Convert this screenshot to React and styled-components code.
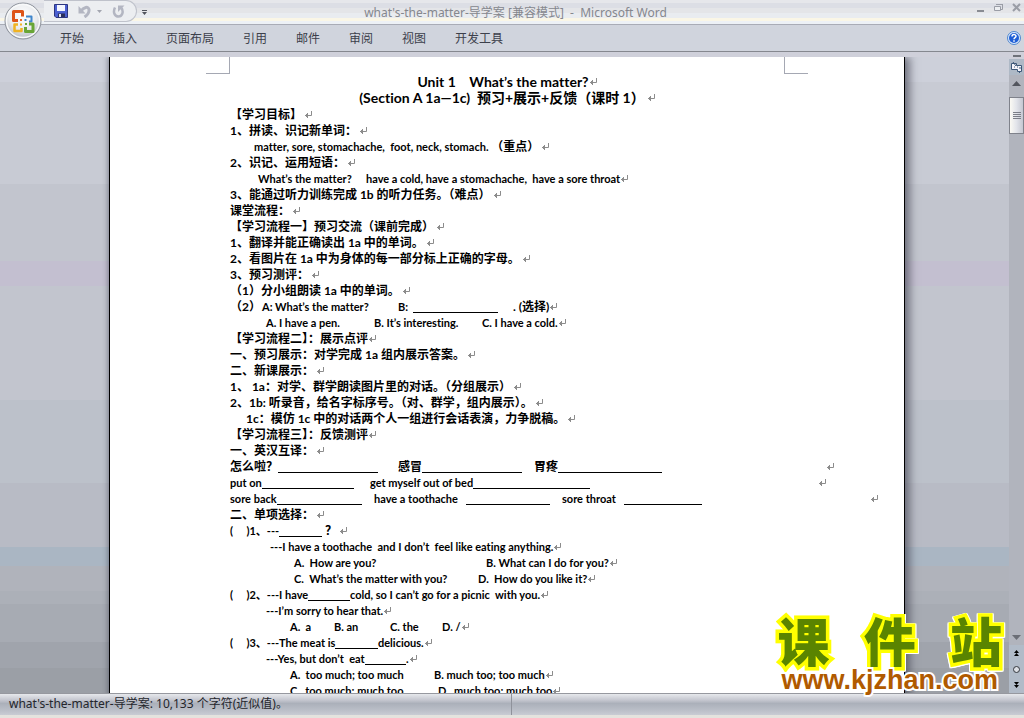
import React from "react";
import styled, { createGlobalStyle, css } from "styled-components";

const TABS = ["开始", "插入", "页面布局", "引用", "邮件", "审阅", "视图", "开发工具"];

// one entry per line: indent before the first cell, then the cells.
// a cell with width ends at a tab stop, a cell with gap draws a blank up to that gap
const LINES = [
  { cells: [{ t: "【学习目标】" }] },
  { cells: [{ t: "1、拼读、识记新单词：" }] },
  { indent: 24, cells: [{ t: "matter, sore, stomachache,  foot, neck, stomach. " }, { t: "（重点）" }] },
  { cells: [{ t: "2、识记、运用短语：" }] },
  {
    indent: 28,
    tight: true,
    cells: [{ t: "What’s the matter?", w: 108 }, { t: "have a cold, have a stomachache,  have a sore throat" }],
  },
  { cells: [{ t: "3、能通过听力训练完成 1b 的听力任务。（难点）" }] },
  { cells: [{ t: "课堂流程：" }] },
  { cells: [{ t: "【学习流程一】预习交流（课前完成）" }] },
  { cells: [{ t: "1、翻译并能正确读出 1a 中的单词。" }] },
  { cells: [{ t: "2、看图片在 1a 中为身体的每一部分标上正确的字母。" }] },
  { cells: [{ t: "3、预习测评：" }] },
  { cells: [{ t: "（1）分小组朗读 1a 中的单词。" }] },
  {
    tight: true,
    cells: [
      { t: "（2）", w: 32 },
      { t: "A: What’s the matter?", w: 136 },
      { t: "B:  ", w: 112, gap: 12 },
      { t: " . (选择)" },
    ],
  },
  {
    indent: 36,
    tight: true,
    cells: [{ t: "A. I have a pen.", w: 108 }, { t: "B. It’s interesting.", w: 108 }, { t: "C. I have a cold." }],
  },
  { tight: true, cells: [{ t: "【学习流程二】：展示点评" }] },
  { cells: [{ t: "一、预习展示：对学完成 1a 组内展示答案。" }] },
  { cells: [{ t: "二、新课展示：" }] },
  { cells: [{ t: "1、 1a：对学、群学朗读图片里的对话。（分组展示）" }] },
  { cells: [{ t: "2、1b: 听录音，给名字标序号。（对、群学，组内展示）。" }] },
  { indent: 16, cells: [{ t: "1c：模仿 1c 中的对话两个人一组进行会话表演，力争脱稿。" }] },
  { tight: true, cells: [{ t: "【学习流程三】：反馈测评" }] },
  { cells: [{ t: "一、英汉互译：" }] },
  {
    tight: true,
    cells: [
      { t: "怎么啦？", w: 168, gap: 20 },
      { t: "感冒", w: 136, gap: 12 },
      { t: "胃疼", w: 292, gap: 164 },
    ],
  },
  {
    tight: true,
    cells: [
      { t: "put on", w: 140, gap: 16 },
      { t: "get myself out of bed", w: 448, gap: 228 },
    ],
  },
  {
    tight: true,
    cells: [
      { t: "sore back", w: 144, gap: 12 },
      { t: "have a toothache   ", w: 188, gap: 12 },
      { t: "sore throat   ", w: 308, gap: 168 },
    ],
  },
  { cells: [{ t: "二、单项选择：" }] },
  { cells: [{ t: "(     )1、---", w: 92, gap: 0 }, { t: " ？" }] },
  { indent: 40, tight: true, cells: [{ t: "---I have a toothache  and I don’t  feel like eating anything." }] },
  { indent: 64, tight: true, cells: [{ t: "A.  How are you?", w: 192 }, { t: "B. What can I do for you?" }] },
  { indent: 64, tight: true, cells: [{ t: "C.  What’s the matter with you?", w: 184 }, { t: "D.  How do you like it?" }] },
  {
    tight: true,
    cells: [{ t: "(     )2、---I have", w: 120, gap: 0 }, { t: "cold, so I can’t go for a picnic  with you." }],
  },
  { indent: 36, tight: true, cells: [{ t: "---I’m sorry to hear that." }] },
  {
    indent: 60,
    tight: true,
    cells: [{ t: "A.  a", w: 44 }, { t: "B. an", w: 56 }, { t: "C. the", w: 52 }, { t: "D. /" }],
  },
  { tight: true, cells: [{ t: "(     )3、---The meat is", w: 148, gap: 0 }, { t: "delicious." }] },
  { indent: 36, tight: true, cells: [{ t: "---Yes, but don’t  eat", w: 140, gap: 0 }, { t: "." }] },
  { indent: 60, tight: true, cells: [{ t: "A.  too much; too much", w: 144 }, { t: "B. much too; too much" }] },
  { indent: 60, tight: true, cells: [{ t: "C.  too much; much too", w: 148 }, { t: "D.  much too; much too" }] },
];

const hasHan = (text) => /[\u4e00-\u9fff（？]/.test(text);

const Mark = () => (
  <MarkIcon viewBox="0 0 8 8" aria-hidden="true">
    <path d="M7.500 0v4.500H1M3.500 2v5M2.500 3v3" fill="none" stroke="#8c8c8c" />
  </MarkIcon>
);

const OfficeLogo = () => (
  <svg width="38" height="38" viewBox="0 0 38 38" aria-hidden="true">
    <defs>
      <radialGradient id="orb" cx="50%" cy="35%" r="65%">
        <stop offset="0" stopColor="#ffffff" />
        <stop offset="0.6" stopColor="#e9ebee" />
        <stop offset="1" stopColor="#b4b8bf" />
      </radialGradient>
    </defs>
    <circle cx="19" cy="19" r="18" fill="url(#orb)" stroke="#8d929b" />
    <circle cx="19" cy="19" r="16.500" fill="none" stroke="#f8f9fa" strokeWidth="1.500" />
    <g fill="none" strokeLinejoin="round">
      <path d="M14 18.500H9.500V9.500h9v5" stroke="#dd5419" strokeWidth="3" />
      <path d="M22 14.500h5.500v5H25" stroke="#3f86cc" strokeWidth="2" />
      <path d="M14 22.500h-3.500V29H17.500v-3" stroke="#f0b323" strokeWidth="2.500" />
      <path d="M25 22h4v7.500h-7.500V25" stroke="#69a636" strokeWidth="3" />
    </g>
    <path d="M16 17h2v2h-2z" fill="#e8692c" />
    <path d="M20.500 17h2v2h-2z" fill="#3f86cc" />
    <path d="M16 21.500h2v2h-2z" fill="#f0b323" />
    <path d="M21 21h2v2h-2z" fill="#69a636" />
  </svg>
);

const SaveIcon = () => (
  <svg width="14" height="14" viewBox="0 0 14 14" aria-hidden="true">
    <path d="M0.500 0.500h13v13H2L0.500 12z" fill="#4a5fd0" stroke="#2c3580" />
    <path d="M3 1h8v6H3z" fill="#f3f6ff" />
    <path d="M4 9.500h7V13H4z" fill="#2a2f5c" />
    <path d="M5 10h2v3H5z" fill="#dfe3f4" />
  </svg>
);

const UndoIcon = () => (
  <svg width="13" height="13" viewBox="0 0 13 13" aria-hidden="true">
    <path d="M3 6C5.500 2 10.500 1 11 4.500c.3 3-1.500 5.500-4.500 7.500" fill="none" stroke="#b3b6c2" strokeWidth="3" />
    <path d="M0.500 1v7.500H7.500z" fill="#b3b6c2" />
  </svg>
);

const RedoIcon = () => (
  <svg width="13" height="13" viewBox="0 0 13 13" aria-hidden="true">
    <path d="M3 2.500C0.500 7.500 3 11.500 6.500 11.500S12 7 9.500 3" fill="none" stroke="#b3b6c2" strokeWidth="2.500" />
    <path d="M6 0.500h6.500L6 7z" fill="#b3b6c2" />
  </svg>
);

const HelpIcon = () => (
  <svg width="14" height="14" viewBox="0 0 14 14" aria-hidden="true">
    <circle cx="7" cy="7" r="6.500" fill="#dbe9fa" stroke="#4f86cf" />
    <circle cx="7" cy="7" r="5" fill="#1f5fd6" />
    <path d="M5 5.500C5 3 9 3 9 5.300 9 6.800 7 6.500 7 8.300M7 9.300v1.500" fill="none" stroke="#fff" strokeWidth="1.500" />
  </svg>
);

const App = () => {
  return (
    <Window>
      <GlobalStyle />
      <TitleBar>
        <QuickAccess>
          <IconBtn aria-label="保存">
            <SaveIcon />
          </IconBtn>
          <IconBtn aria-label="撤消">
            <UndoIcon />
            <svg width="5" height="3" viewBox="0 0 5 3" aria-hidden="true">
              <path d="M0 0h5L2.500 3z" fill="#a3a6b0" />
            </svg>
          </IconBtn>
          <IconBtn aria-label="恢复">
            <RedoIcon />
          </IconBtn>
        </QuickAccess>
        <IconBtn aria-label="自定义快速访问工具栏">
          <svg width="5" height="5" viewBox="0 0 5 5" aria-hidden="true">
            <path d="M0 0h5v1H0zM0 2h5L2.500 5z" fill="#50535c" />
          </svg>
        </IconBtn>
        <Title>what's-the-matter-导学案 [兼容模式]  -  Microsoft Word</Title>
        <WindowBtns>
          <IconBtn aria-label="最小化">
            <svg width="9" height="10" viewBox="0 0 9 10" aria-hidden="true">
              <path d="M1 8h7" stroke="#898c93" strokeWidth="2" />
            </svg>
          </IconBtn>
          <IconBtn aria-label="还原">
            <svg width="9" height="10" viewBox="0 0 9 10" aria-hidden="true">
              <path d="M2.500 2V1.500h6v5H7M2 1.500h7" fill="none" stroke="#9a9da6" />
              <path d="M0.500 3.500h6v4h-6z" fill="#eceef1" stroke="#9a9da6" />
            </svg>
          </IconBtn>
          <IconBtn aria-label="关闭">
            <svg width="9" height="10" viewBox="0 0 9 10" aria-hidden="true">
              <path d="M1 1l7 7M8 1L1 8" stroke="#9a9da6" strokeWidth="2" />
            </svg>
          </IconBtn>
        </WindowBtns>
      </TitleBar>
      <OfficeBtn aria-label="Office 按钮">
        <OfficeLogo />
      </OfficeBtn>
      <Ribbon>
        {TABS.map((tab) => (
          <Tab key={tab}>{tab}</Tab>
        ))}
        <HelpBtn aria-label="帮助">
          <HelpIcon />
        </HelpBtn>
      </Ribbon>

      <Workspace>
        <Desk>
          <Page>
            <Corners>
              <Corner />
              <Corner $right />
            </Corners>
            <Heading>
              Unit 1    What’s the matter?
              <Mark />
            </Heading>
            <Heading>
              (Section A 1a—1c)  预习+展示+反馈（课时 1）
              <MarkGap />
              <Mark />
            </Heading>
            <Body>
              {LINES.map((line, i) => (
                <Line key={i} $indent={line.indent}>
                  {line.cells.map((cell, j) => (
                    <Cell key={j} $w={cell.w} $han={hasHan(cell.t)}>
                      {cell.t}
                      {cell.gap !== undefined && <Blank $gap={cell.gap} />}
                    </Cell>
                  ))}
                  {!line.tight && <MarkGap />}
                  <Mark />
                </Line>
              ))}
            </Body>
          </Page>
        </Desk>
        <ScrollBar>
          <SplitBar />
          <RulerBtn aria-label="标尺">
            <svg width="13" height="13" viewBox="0 0 13 13" aria-hidden="true">
              <path d="M1.500 2.500h5v2h5v6h-4v-2h-6z" fill="#f4f4fa" stroke="#3d5878" />
              <path d="M3 1l3 4M7 9l3 3M4 6h1M7 6h1M10 6v2" stroke="#3d5878" />
            </svg>
          </RulerBtn>
          <ArrowBtn aria-label="向上滚动">
            <svg width="9" height="5" viewBox="0 0 9 5" aria-hidden="true">
              <path d="M0 5L4.500 0 9 5z" fill="#53565e" />
            </svg>
          </ArrowBtn>
          <Thumb>
            <i />
            <i />
            <i />
            <i />
          </Thumb>
          <Track />
          <ArrowBtn aria-label="向下滚动">
            <svg width="9" height="5" viewBox="0 0 9 5" aria-hidden="true">
              <path d="M0 0L4.500 5 9 0z" fill="#6b6e76" />
            </svg>
          </ArrowBtn>
          <BrowseBtn aria-label="前一页">
            <svg width="5" height="6" viewBox="0 0 5 6" aria-hidden="true">
              <path d="M2.500 0L5 3H0zM2.500 3L5 6H0z" fill="#000" />
            </svg>
          </BrowseBtn>
          <BrowseBtn aria-label="选择浏览对象">
            <svg width="7" height="7" viewBox="0 0 7 7" aria-hidden="true">
              <circle cx="3.500" cy="3.500" r="3" fill="#dcdfe5" stroke="#33363c" />
            </svg>
          </BrowseBtn>
          <BrowseBtn aria-label="下一页">
            <svg width="5" height="6" viewBox="0 0 5 6" aria-hidden="true">
              <path d="M0 0h5L2.500 3zM0 3h5L2.500 6z" fill="#000" />
            </svg>
          </BrowseBtn>
        </ScrollBar>
      </Workspace>

      <StatusBar>
        <StatusCell>what's-the-matter-导学案: 10,133 个字符(近似值)。</StatusCell>
        <StatusCell />
      </StatusBar>

      <Watermark>
        <WatermarkName>
          <span>课</span>
          <span>件</span>
          <span>站</span>
        </WatermarkName>
        <WatermarkUrl>www.kjzhan.com</WatermarkUrl>
      </Watermark>
    </Window>
  );
};

const GlobalStyle = createGlobalStyle`
  body {
    margin: 0;
    background-color: #ece9d8;
  }
  * {
    box-sizing: border-box;
  }
`;

const uiFont = css`
  font-family: "Noto Sans", "Noto Sans CJK SC", sans-serif;
  font-size: 12px;
`;

const Window = styled.div`
  ${uiFont}
  position: relative;
  display: flex;
  flex-direction: column;
  height: 100vh;
  overflow: hidden;
`;

const TitleBar = styled.header`
  display: flex;
  align-items: center;
  height: 25px;
  padding-left: 44px;
  border-bottom: 1px solid #a9acb6;
  background: linear-gradient(
    #e6e7eb 3px,
    #dcdee5 3px 8px,
    #e4e5e8 8px 13px,
    #e9ecf0 13px 18px,
    #faf6e6 18px 21px,
    #edf1f6 21px
  );
`;

const QuickAccess = styled.div`
  display: flex;
  align-items: center;
  gap: 10px;
  width: 93px;
  height: 22px;
  margin-bottom: 2px;
  padding-left: 10px;
  border: 1px solid #bfc2cb;
  border-left: none;
  border-radius: 0 11px 11px 0;
  background-color: #eceef1;
`;

const IconBtn = styled.button`
  display: flex;
  align-items: center;
  gap: 6px;
  padding: 0;
  border: none;
  background: none;

  ${QuickAccess} + & {
    margin-left: 5px;
  }
`;

const Title = styled.h1`
  flex: 1;
  margin: 0;
  padding-right: 92px;
  text-align: center;
  font-size: 12px;
  font-weight: 400;
  white-space: pre;
  color: #85878e;
`;

const WindowBtns = styled.div`
  display: flex;
  gap: 9px;
  margin-bottom: 8px;
  padding-right: 3px;
`;

const OfficeBtn = styled.button`
  position: absolute;
  top: 2px;
  left: 4px;
  padding: 0;
  border: none;
  border-radius: 50%;
  background: none;
`;

const Ribbon = styled.nav`
  display: flex;
  align-items: center;
  gap: 29px;
  height: 27px;
  padding: 0 3px 0 60px;
  border-bottom: 1px solid #85888f;
  background-color: #d0d4dd;
`;

const Tab = styled.button`
  ${uiFont}
  padding: 0;
  border: none;
  background: none;
  color: #3c404b;
`;

const HelpBtn = styled(IconBtn)`
  margin-left: auto;
`;

const Workspace = styled.div`
  flex: 1;
  display: flex;
  min-height: 0;
  background-color: #cfd0da;
`;

const Desk = styled.main`
  flex: 1;
  display: grid;
  grid-template-columns: minmax(0, 109fr) minmax(0, 796fr) minmax(0, 104fr);
  margin-top: 5px;
  overflow: hidden;
  background: linear-gradient(
    #cdd0da 4%,
    #c8cbd4 4% 20%,
    #c2c5ce 20% 32%,
    #c3bfd0 32% 36%,
    #c2c5ce 36% 54%,
    #bcc1ca 54% 67%,
    #b8bbc5 67% 77%,
    #aab6c3 77% 80%,
    #b0b3bb 80% 84%,
    #acb0b8 84% 86%,
    #a7abb3 86% 92%,
    #a0a4ac 92% 96%,
    #9b9fa6 96%
  );
`;

const Page = styled.article`
  grid-column: 2;
  padding: 0 120px;
  border: solid #000;
  border-width: 0 1px;
  background-color: #fff;
  box-shadow:
    5px 0 8px rgba(60, 62, 75, 0.6),
    -2px 0 4px rgba(60, 62, 80, 0.35);
  font-family: Lato, "Noto Sans CJK SC", sans-serif;
  font-weight: 700;
  font-variant-ligatures: none;
  line-height: 16px;
  color: #000;
`;

const Corners = styled.div`
  display: flex;
  justify-content: space-between;
  margin: 0 -24px;
  height: 17px;
`;

const Corner = styled.span`
  width: 24px;
  border: solid #a5a8b3;
  border-width: ${(props) => (props.$right ? "0 0 1px 1px" : "0 1px 1px 0")};
`;

const Heading = styled.h2`
  display: flex;
  justify-content: center;
  align-items: center;
  height: 16px;
  margin: 0;
  font-size: 14px;
  white-space: pre;
`;

const Body = styled.div`
  padding-top: 1px;
`;

const Line = styled.div`
  display: flex;
  align-items: center;
  height: 16px;
  padding-left: ${(props) => props.$indent || 0}px;
  white-space: pre;
`;

const Cell = styled.span`
  display: flex;
  flex: none;
  width: ${(props) => (props.$w ? props.$w + "px" : "auto")};
  font-size: ${(props) => (props.$han ? 12 : 11)}px;
`;

const Blank = styled.span`
  flex: 1;
  height: 14px;
  margin-right: ${(props) => props.$gap}px;
  border-bottom: 1px solid #000;
`;

const MarkGap = styled.span`
  width: 2px;
`;

const MarkIcon = styled.svg`
  flex: none;
  width: 8px;
  height: 8px;
`;

const ScrollBar = styled.aside`
  display: flex;
  flex-direction: column;
  width: 15px;
  background-color: #b1b4bd;
`;

const SplitBar = styled.div`
  height: 7px;
  border: solid #cfd0da;
  border-width: 3px 3px 2px 4px;
  background-color: #6e7179;
`;

const RulerBtn = styled.button`
  display: flex;
  justify-content: center;
  align-items: center;
  height: 16px;
  padding: 0;
  border: none;
  background-color: #aeb9c6;
`;

const ArrowBtn = styled.button`
  display: flex;
  justify-content: center;
  align-items: center;
  height: 16px;
  padding: 0;
  border: none;
  background: none;
`;

const Thumb = styled.div`
  display: flex;
  flex-direction: column;
  justify-content: center;
  align-items: center;
  gap: 1px;
  height: 37px;
  margin-top: 6px;
  border: 1px solid #7f828b;
  background: linear-gradient(90deg, #fbfaf4, #e2e4ea 50%, #c4c7d1);

  & i {
    width: 8px;
    height: 1px;
    background-color: #7b7e87;
  }
`;

const Track = styled.div`
  flex: 1;
`;

const BrowseBtn = styled(ArrowBtn)`
  background-color: #b1bbc8;
`;

const StatusBar = styled.footer`
  display: grid;
  grid-template-columns: 1fr 1fr;
  height: 25px;
  border-top: 1px solid #96989f;
  border-bottom: 3px solid #e4e3de;
  background: linear-gradient(#e6e8ec, #c3c5ce 30%, #abb0ba 45%, #bcc0c9 80%, #c9ccd4);
`;

const StatusCell = styled.div`
  padding-left: 9px;
  border-right: 1px solid #8f929b;
  line-height: 20px;
  color: #24262c;

  &:last-child {
    border-right: none;
  }
`;

const Watermark = styled.div`
  position: absolute;
  right: 22px;
  bottom: 26px;
  display: flex;
  flex-direction: column;
  gap: 4px;
`;

const WatermarkName = styled.div`
  display: flex;
  justify-content: space-between;
  font-family: "Noto Sans CJK SC", sans-serif;
  font-size: 52px;
  font-weight: 900;
  line-height: 48px;
  color: #5a8400;
  -webkit-text-stroke: 7px #ffff00;
  paint-order: stroke fill;
  filter: drop-shadow(1px 0 0 #fff) drop-shadow(-1px 0 0 #fff) drop-shadow(0 1px 0 #fff);
`;

const WatermarkUrl = styled.div`
  z-index: 1;
  padding: 0 4px;
  font-family: "Liberation Sans", Arial, sans-serif;
  font-size: 27px;
  font-weight: 700;
  line-height: 24px;
  color: #b05a00;
  -webkit-text-stroke: 4px #fff;
  paint-order: stroke fill;
`;

export default App;
